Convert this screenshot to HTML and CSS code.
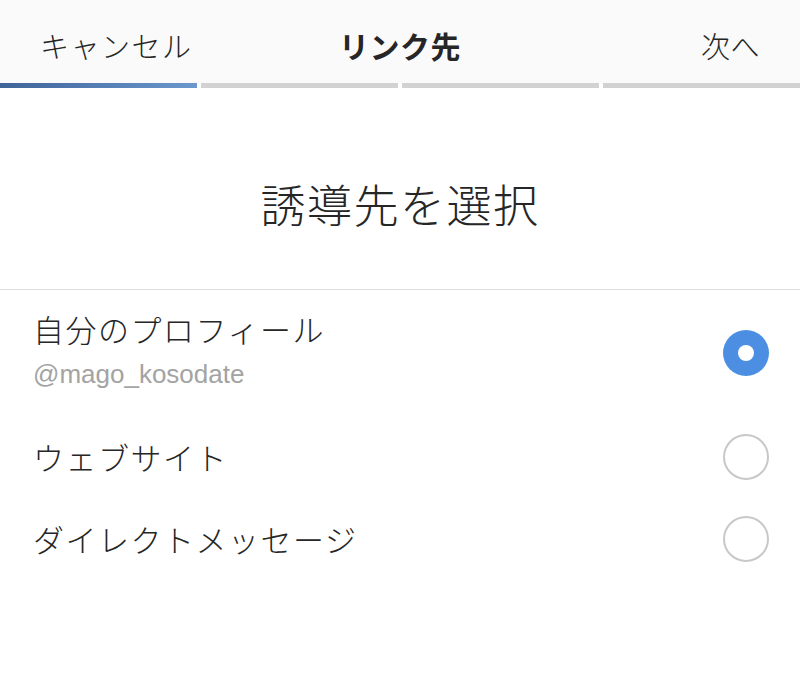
FILE: index.html
```html
<!DOCTYPE html>
<html lang="ja">
<head>
<meta charset="utf-8">
<link rel="stylesheet" href="styles.css">
</head>
<body>
<header class="topbar">
  <span class="nav-left">キャンセル</span>
  <span class="nav-title">リンク先</span>
  <span class="nav-right">次へ</span>
</header>
<div class="progress">
  <div class="seg seg-active"></div>
  <div class="seg"></div>
  <div class="seg"></div>
  <div class="seg"></div>
</div>
<section class="heading">
  <h1 class="heading-text">誘導先を選択</h1>
</section>
<div class="options">
  <div class="option option-first">
    <div class="option-text">
      <div class="option-label">自分のプロフィール</div>
      <div class="option-sub">@mago_kosodate</div>
    </div>
    <span class="radio radio-on"></span>
  </div>
  <div class="option">
    <div class="option-text">
      <div class="option-label">ウェブサイト</div>
    </div>
    <span class="radio"></span>
  </div>
  <div class="option">
    <div class="option-text">
      <div class="option-label">ダイレクトメッセージ</div>
    </div>
    <span class="radio"></span>
  </div>
</div>
</body>
</html>
```
FILE: styles.css
```css
html, body {
  margin: 0;
  padding: 0;
  background: #ffffff;
}
body {
  width: 800px;
  font-family: "Noto Sans CJK JP", "Noto Sans", sans-serif;
  color: #262626;
}
.topbar {
  height: 83px;
  box-sizing: border-box;
  padding: 6px 40px 0 40px;
  display: grid;
  grid-template-columns: 1fr auto 1fr;
  align-items: center;
  background: #fafafa;
  font-size: 29px;
  font-weight: 300;
}
.nav-left {
  justify-self: start;
  letter-spacing: 1.5px;
}
.nav-title {
  font-weight: 700;
  font-size: 30px;
  letter-spacing: 0.5px;
}
.nav-right {
  justify-self: end;
  letter-spacing: 0.5px;
}
.progress {
  display: flex;
  gap: 4px;
  height: 5px;
  background: #ffffff;
}
.seg {
  flex: 1;
  background: #d2d2d2;
}
.seg-active {
  background: linear-gradient(to right, #3f6498, #6b98cd);
}
.heading {
  height: 202px;
  box-sizing: border-box;
  border-bottom: 1px solid #dddddd;
  display: flex;
  justify-content: center;
  padding-top: 86px;
}
.heading-text {
  margin: 0;
  font-size: 45px;
  font-weight: 300;
  line-height: 60px;
  height: 60px;
  letter-spacing: 1.5px;
}
.options {
  display: flex;
  flex-direction: column;
}
.option {
  height: 82px;
  display: flex;
  align-items: center;
  justify-content: space-between;
  padding: 0 31px 0 33px;
}
.option-first {
  height: 126px;
}
.option-text {
  display: flex;
  flex-direction: column;
}
.option-label {
  font-size: 31px;
  font-weight: 300;
  line-height: 44px;
  letter-spacing: 1.5px;
}
.option-sub {
  font-family: "Liberation Sans", "Noto Sans", sans-serif;
  font-size: 26px;
  color: #a3a3a3;
  line-height: 46px;
}
.option-first .option-text {
  margin-top: -2px;
}
.radio {
  width: 46px;
  height: 46px;
  box-sizing: border-box;
  border-radius: 50%;
  border: 2.5px solid #c8c8c8;
  display: flex;
  align-items: center;
  justify-content: center;
  flex-shrink: 0;
}
.radio-on {
  border: none;
  background: #4c8fe2;
}
.radio-on::after {
  content: "";
  width: 16px;
  height: 16px;
  border-radius: 50%;
  background: #ffffff;
}
```
